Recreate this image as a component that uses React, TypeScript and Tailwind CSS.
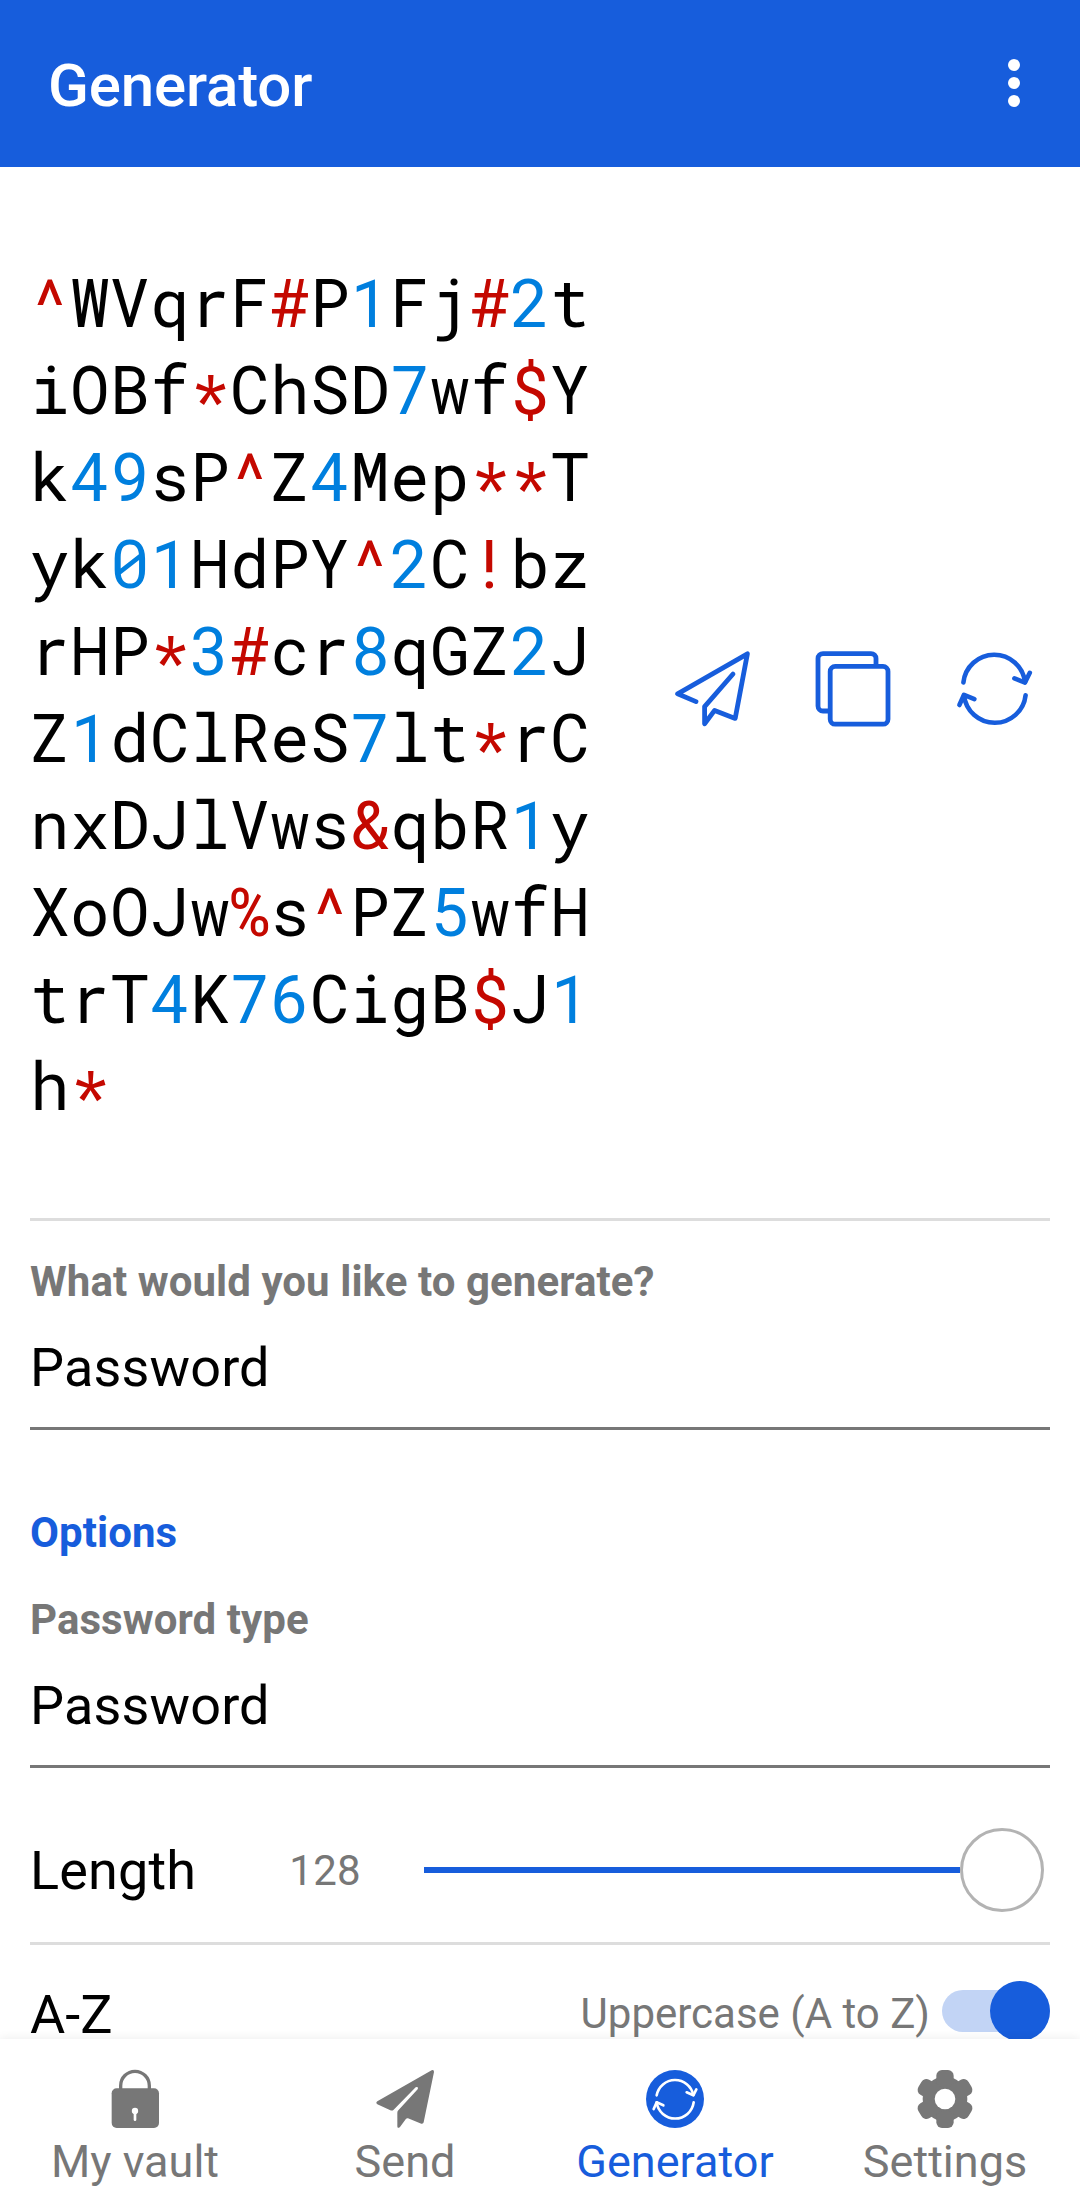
import type { ReactNode } from "react";

const PASSWORD_LINES = [
  "^WVqrF#P1Fj#2t",
  "iOBf*ChSD7wf$Y",
  "k49sP^Z4Mep**T",
  "yk01HdPY^2C!bz",
  "rHP*3#cr8qGZ2J",
  "Z1dClReS7lt*rC",
  "nxDJlVws&qbR1y",
  "XoOJw%s^PZ5wfH",
  "trT4K76CigB$J1",
  "h*",
];

function styleOf(run: string) {
  if (/[0-9]/.test(run)) return "text-[#007fde]";
  if (/[A-Za-z]/.test(run)) return "text-black";
  // Asterisks sit lower and slightly smaller than the other symbols.
  if (run.startsWith("*")) return "-mr-px pl-px align-[-6px] text-[63px] leading-none tracking-[2.2px] text-[#c40800]";
  return "text-[#c40800]";
}

function PasswordLine({ line }: { line: string }) {
  const runs = line.match(/[A-Za-z]+|[0-9]+|\*+|[^A-Za-z0-9*]+/g) ?? [];
  return (
    <div className="h-[87px] whitespace-pre">
      {runs.map((run, i) => (
        <span key={i} className={styleOf(run)}>
          {run}
        </span>
      ))}
    </div>
  );
}

function SendOutlineIcon() {
  return (
    <svg width="80" height="88" viewBox="672 649 80 88" fill="none" stroke="#175ddc" strokeWidth="4.8" strokeLinecap="round" strokeLinejoin="round">
      <path d="M696 701.6 L677.6 693.8 L747.4 653.8 L735.2 718.4 L714.6 710.4 L704.6 723.8 V706.6 L733 674" />
    </svg>
  );
}

function CopyIcon() {
  return (
    <svg width="80" height="88" viewBox="813 649 80 88" fill="none" stroke="#175ddc" strokeWidth="4.8">
      <path d="M830 711 H823 A5 5 0 0 1 818 706 V658.6 A5 5 0 0 1 823 653.6 H871 A5 5 0 0 1 876 658.6 V666" />
      <rect x="830.2" y="666.4" width="57.8" height="57.8" rx="5" />
    </svg>
  );
}

function RefreshIcon() {
  return (
    <svg width="80" height="88" viewBox="954 649 80 88" fill="none" stroke="#175ddc" strokeWidth="4.6" strokeLinecap="round" strokeLinejoin="round">
      <path d="M963.4 682.4 A31 31 0 0 1 1025 682" />
      <path d="M1014.4 678.4 L1025 682.6 L1029.8 672.8" />
      <path d="M1025.6 695.2 A31 31 0 0 1 964 695.4" />
      <path d="M974.4 699.2 L964 694.8 L959.4 705" />
    </svg>
  );
}

function LockIcon() {
  return (
    <svg width="80" height="80" viewBox="0 0 240 240">
      <path d="M77 91 V77 a43 43 0 0 1 86 0 V91" fill="none" stroke="#777" strokeWidth="10" />
      <rect x="50" y="85" width="142" height="119" rx="15" fill="#777" />
      <circle cx="120" cy="153" r="9.5" fill="#fff" />
      <path d="M120 155 V179" stroke="#fff" strokeWidth="8" strokeLinecap="round" />
    </svg>
  );
}

function SendIcon() {
  return (
    <svg width="80" height="80" viewBox="0 0 240 240" fill="#777">
      <path d="M200 31 Q207 28 207 36 L176 187 Q175 192 169 191 L129 175 Q125 174 122 178 L105 201 Q97 207 97 199 V158 Q97 154 100 151 L158 88 Q160 84 158 82 Q155 80 152 82 L86 149 Q82 153 76 151 L37 133 Q31 129 37 124 Z" />
    </svg>
  );
}

function GeneratorIcon() {
  return (
    <svg width="80" height="80" viewBox="0 0 240 240" fill="none" stroke="#fff" strokeWidth="8" strokeLinecap="round" strokeLinejoin="round">
      <circle cx="120" cy="117" r="87" fill="#175ddc" stroke="none" />
      <path d="M65 106 A56 56 0 0 1 175 105" />
      <path d="M155 97 L175 106 L184 88" />
      <path d="M176 127 A56 56 0 0 1 65 127" />
      <path d="M85 136 L65 127 L56 147" />
    </svg>
  );
}

function SettingsIcon() {
  return (
    <svg width="80" height="80" viewBox="0 0 240 240" fill="#777">
      <circle cx="120" cy="117" r="67" />
      <rect x="94" y="30" width="52" height="174" rx="17" />
      <rect x="94" y="30" width="52" height="174" rx="17" transform="rotate(60 120 117)" />
      <rect x="94" y="30" width="52" height="174" rx="17" transform="rotate(120 120 117)" />
      <circle cx="120" cy="117" r="31" fill="#fff" />
    </svg>
  );
}

function Field({ label, value }: { label: string; value: string }) {
  return (
    <div className="border-b-[3px] border-[#777777] pb-[27px]">
      <div className="text-[42px] leading-[50px] font-bold tracking-[0.07px] text-[#777777]">{label}</div>
      <div className="mt-[29px] text-[54px] leading-[64px] tracking-[0.15px]">{value}</div>
    </div>
  );
}

function Tab({ icon, label, active }: { icon: ReactNode; label: string; active?: boolean }) {
  return (
    <button className={`flex flex-1 flex-col items-center pt-[21px] ${active ? "text-[#175ddc]" : "text-[#777777]"}`}>
      {icon}
      <span className="text-[45px] leading-[44px]">{label}</span>
    </button>
  );
}

export default function App() {
  return (
    <div className="flex h-[2207px] w-[1080px] flex-col overflow-hidden bg-white font-['Roboto',sans-serif] text-black">
      <header className="flex h-[167px] shrink-0 items-center justify-between bg-[#175ddc] pr-[60px] pl-12 text-white">
        <h1 className="pt-[4px] text-[60px] leading-[70px] font-medium tracking-[-0.15px]">Generator</h1>
        <div className="flex flex-col gap-1.5 pb-px">
          <span className="size-3 rounded-full bg-white" />
          <span className="size-3 rounded-full bg-white" />
          <span className="size-3 rounded-full bg-white" />
        </div>
      </header>

      <main className="min-h-0 flex-1 overflow-hidden px-[30px] pt-px">
        <section className="flex items-center justify-between border-b-[3px] border-[#dddddd] py-[90px]">
          <div className="font-['Roboto_Mono',monospace] text-[66px] leading-[87px] tracking-[0.4px]">
            {PASSWORD_LINES.map((line) => (
              <PasswordLine key={line} line={line} />
            ))}
          </div>
          <div className="mr-4 flex gap-[61px]">
            <SendOutlineIcon />
            <CopyIcon />
            <RefreshIcon />
          </div>
        </section>

        <section className="pt-9">
          <Field label="What would you like to generate?" value="Password" />
        </section>

        <section className="pt-[78px]">
          <h2 className="mb-[37px] text-[42px] leading-[50px] font-bold tracking-[0.07px] text-[#175ddc]">Options</h2>
          <Field label="Password type" value="Password" />

          <div className="flex h-[177px] items-center border-b-[3px] border-[#dddddd] pt-[31px]">
            <span className="w-[230px] text-[54px] leading-[64px] tracking-[0.15px]">Length</span>
            <span className="w-[101px] text-right text-[42px] leading-[50px] tracking-[0.3px] text-[#777777]">128</span>
            <div className="mr-1.5 mb-px ml-[63px] flex flex-1 items-center">
              <div className="h-1.5 flex-1 bg-[#175ddc]" />
              <div className="size-[84px] rounded-full border-[3px] border-[#b3b3b3] bg-white" />
            </div>
          </div>

          <div className="flex h-[140px] items-center">
            <span className="flex-1 text-[54px] leading-[64px]">A-Z</span>
            <span className="mr-3 mb-0.5 text-[42px] leading-[50px] text-[#777777]">Uppercase (A to Z)</span>
            <div className="mb-2 flex h-[42px] w-[108px] items-center justify-end rounded-full bg-[#c2d4f5]">
              <div className="size-[60px] shrink-0 rounded-full bg-[#175ddc]" />
            </div>
          </div>
        </section>
      </main>

      <nav className="relative flex h-[168px] shrink-0 bg-white shadow-[0_-1px_9px_rgba(0,0,0,0.07)]">
        <Tab icon={<LockIcon />} label="My vault" />
        <Tab icon={<SendIcon />} label="Send" />
        <Tab icon={<GeneratorIcon />} label="Generator" active />
        <Tab icon={<SettingsIcon />} label="Settings" />
      </nav>
    </div>
  );
}
